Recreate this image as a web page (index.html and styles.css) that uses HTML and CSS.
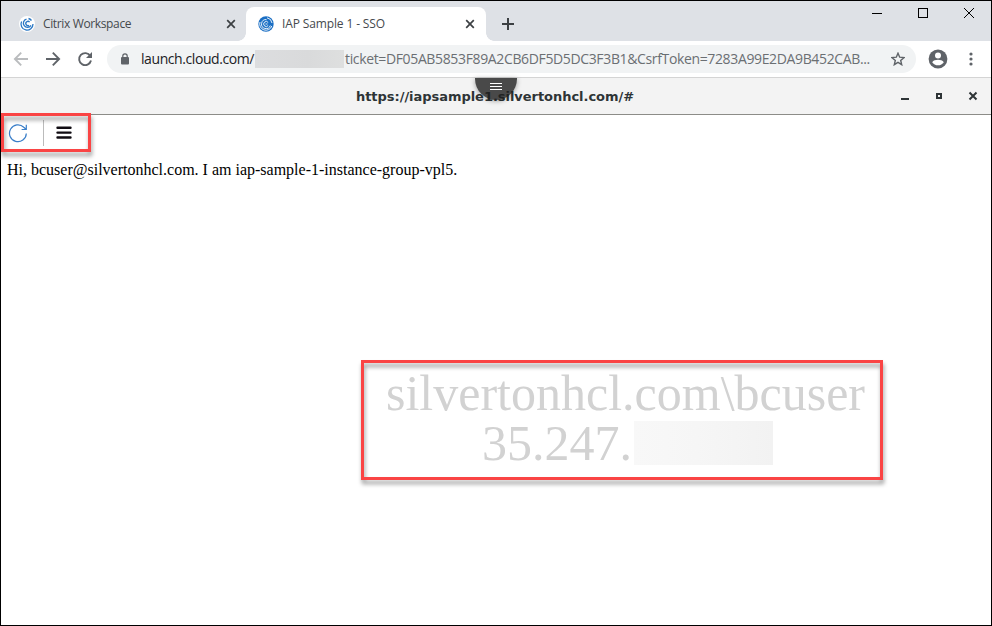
FILE: index.html
```html
<!DOCTYPE html>
<html lang="en">
<head>
<meta charset="utf-8">
<title>IAP Sample 1 - SSO</title>
<link rel="stylesheet" href="styles.css">
</head>
<body>
<div class="window">
  <header class="tabstrip">
    <div class="tab tab-idle">
      <svg class="favicon" width="16" height="16" viewBox="0 0 16 16"><circle cx="8" cy="8" r="8" fill="#fff"/><g fill="none" stroke="#2b78c5" stroke-width="1.300"><path d="M2.600 5.500A6 6 0 1 0 14 8M7.500 3.200A4.100 4.100 0 1 0 12 9.300M10.600 6.200A2.100 2.100 0 1 0 10 9.300M9.500 2.500A5.800 5.800 0 0 1 12.500 4.500"/></g></svg>
      <span class="tab-title title-idle">Citrix Workspace</span>
      <svg class="tab-close" width="10" height="10" viewBox="0 0 10 10"><path d="M1.200 1.200l7.600 7.600M8.800 1.200L1.200 8.800"/></svg>
    </div>
    <div class="tab tab-active">
      <svg class="favicon" width="16" height="16" viewBox="0 0 16 16"><circle cx="8" cy="8" r="7.700" fill="#1b6fc4"/><g fill="none" stroke="#fff" stroke-width=".9"><path d="M2 6A6.200 6.200 0 0 0 13.800 10M8.500 3.600A4.500 4.500 0 1 0 12.300 9.500M10.200 6.500A2.500 2.500 0 1 0 10.200 9.500M7.500 8H9.500M9 1.800A6.200 6.200 0 0 1 14 7"/></g></svg>
      <span class="tab-title title-active">IAP Sample 1 - SSO</span>
      <svg class="tab-close" width="10" height="10" viewBox="0 0 10 10"><path d="M1.200 1.200l7.600 7.600M8.800 1.200L1.200 8.800"/></svg>
    </div>
    <svg class="new-tab" width="12" height="12" viewBox="0 0 12 12"><path d="M6 0v12M0 6h12"/></svg>
    <div class="window-controls">
      <svg width="12" height="12" viewBox="0 0 12 12" shape-rendering="crispEdges"><path d="M1 6.500h10"/></svg>
      <svg width="12" height="12" viewBox="0 0 12 12" shape-rendering="crispEdges"><path d="M1.500 1.500h9v9h-9z"/></svg>
      <svg width="12" height="12" viewBox="0 0 12 12"><path d="M1 1l10 10M11 1L1 11"/></svg>
    </div>
  </header>
  <nav class="toolbar">
    <svg class="nav-icon back" viewBox="0 0 16 16"><path d="M15 8H2.500M8.200 1.700L1.900 8l6.300 6.300"/></svg>
    <svg class="nav-icon" viewBox="0 0 16 16"><path d="M1 8h12.500M7.800 1.700L14.100 8l-6.300 6.300"/></svg>
    <svg class="nav-icon" viewBox="0 0 16 16"><path d="M13.300 5A6 6 0 1 0 14 9.500"/><path d="M15 1v6H9z" fill="#5f6368" stroke="none"/></svg>
    <div class="omnibox">
      <svg class="lock" width="10" height="12" viewBox="0 0 10 12"><rect x="1" y="4" width="8" height="7.500" rx="1" fill="#5f6368"/><path d="M2.800 4.500V3a2.200 2.200 0 0 1 4.400 0v1.500" fill="none" stroke="#5f6368" stroke-width="1.200"/></svg>
      <span class="url-host">launch.cloud.com/</span>
      <span class="url-mask"></span>
      <span class="url-query">ticket=DF05AB5853F89A2CB6DF5D5DC3F3B1&amp;CsrfToken=7283A99E2DA9B452CAB...</span>
      <svg class="star" width="14" height="14" viewBox="0 0 14 14"><path d="M7 1.200l1.700 4 4.300.4-3.300 2.800 1 4.300L7 10.400l-3.700 2.300 1-4.300L1 5.600l4.300-.4z"/></svg>
    </div>
    <svg class="avatar" width="20" height="20" viewBox="0 0 20 20"><circle cx="10" cy="10" r="9.400" fill="#5f6368"/><circle cx="10" cy="6.500" r="3" fill="#fff"/><path d="M4.200 13.200c1-1.700 3.600-2.400 5.800-2.400s4.800.7 5.800 2.400a6.900 6.900 0 0 1-11.600 0z" fill="#fff"/></svg>
    <svg class="more" width="4" height="14" viewBox="0 0 4 14"><circle cx="2" cy="2" r="1.600"/><circle cx="2" cy="7" r="1.600"/><circle cx="2" cy="12" r="1.600"/></svg>
  </nav>
  <div class="remote-bar">
    <span class="remote-title">https://iapsample1.silvertonhcl.com/#</span>
    <div class="remote-handle"><svg width="12" height="8" viewBox="0 0 12 8" shape-rendering="crispEdges"><path d="M0 .5h12M0 3.500h12M0 6.500h12"/></svg></div>
    <div class="remote-controls">
      <svg width="10" height="10" viewBox="0 0 10 10" shape-rendering="crispEdges"><path d="M1 8h8"/></svg>
      <svg width="10" height="10" viewBox="0 0 10 10" shape-rendering="crispEdges"><path d="M3 3h4v4H3z"/></svg>
      <svg width="10" height="10" viewBox="0 0 10 10"><path d="M1.500 1.500l7 7M8.500 1.500l-7 7"/></svg>
    </div>
  </div>
  <main class="page">
    <div class="page-tools">
      <svg class="reload" width="20" height="20" viewBox="0 0 20 20"><path d="M18.300 10.500A8.400 8.400 0 1 1 15.800 4.300L18 6.300M18.300 1.800v4.700h-4.700"/></svg>
      <span class="divider"></span>
      <svg class="menu" width="16" height="14" viewBox="0 0 16 14"><path d="M1.500 1.800h13M1.500 6.600h13M1.500 11.500h13"/></svg>
    </div>
    <p class="greeting">Hi, bcuser@silvertonhcl.com. I am iap-sample-1-instance-group-vpl5.</p>
    <div class="callout callout-tools"></div>
    <div class="watermark">
      <div class="mark-user">silvertonhcl.com\bcuser</div>
      <div class="mark-ip"><span>35.247.</span><span class="ip-mask"></span></div>
    </div>
    <div class="callout callout-mark"></div>
  </main>
</div>
</body>
</html>
```
FILE: styles.css
```css
* { box-sizing: border-box; }
body { margin: 0; }
svg { display: block; flex: none; }
.window {
  width: 992px;
  height: 626px;
  border: 1px solid #000;
  background: #fff;
  display: flex;
  flex-direction: column;
  overflow: hidden;
  font-family: "Open Sans", sans-serif;
}
.tabstrip {
  height: 40px;
  flex: none;
  background: #dee1e6;
  display: flex;
  align-items: flex-end;
}
.tab {
  height: 34px;
  display: flex;
  align-items: center;
  color: #45494d;
  font-size: 12px;
  white-space: nowrap;
}
.tab-idle { width: 245px; padding: 0 10px 0 18px; }
.tab-active {
  position: relative;
  width: 240px;
  padding: 0 11px 0 12px;
  background: #fff;
  border-radius: 8px 8px 0 0;
}
.tab-active::before, .tab-active::after {
  content: "";
  position: absolute;
  bottom: 0;
  width: 8px;
  height: 8px;
}
.tab-active::before { left: -8px; background: radial-gradient(circle at 0 0, transparent 7.5px, #fff 8px); }
.tab-active::after { right: -8px; background: radial-gradient(circle at 100% 0, transparent 7.5px, #fff 8px); }
.tab-title { margin-left: 8px; line-height: 16px; }
.title-idle { letter-spacing: -.36px; }
.title-active { letter-spacing: -.13px; }
.tab-close { margin-left: auto; fill: none; stroke: #3c4043; stroke-width: 1.7; }
.new-tab { margin: 0 0 11px 16px; stroke: #3c4043; stroke-width: 2; }
.window-controls {
  align-self: flex-start;
  display: flex;
  gap: 34px;
  margin: 6px 16px 0 auto;
  fill: none;
  stroke: #000;
  stroke-width: 1;
}
.toolbar {
  height: 36px;
  flex: none;
  display: flex;
  align-items: center;
  padding-left: 12px;
}
.nav-icon { width: 16px; height: 16px; margin-right: 16px; fill: none; stroke: #5f6368; stroke-width: 1.9; }
.back { stroke: #babcbe; }
.omnibox {
  width: 809px;
  height: 28px;
  margin-left: -2px;
  padding: 0 11px 0 13px;
  border-radius: 14px;
  background: #f1f3f4;
  display: flex;
  align-items: center;
  font-size: 14px;
  line-height: 18px;
  white-space: nowrap;
}
.url-host { width: 114px; margin-left: 11px; color: #202124; letter-spacing: -.42px; }
.url-mask { width: 89px; height: 18px; background: linear-gradient(90deg, #dcdddf, #d9dadb 60%, #dedfdf); }
.url-query { width: 526px; margin-left: 1px; color: #6b6f73; letter-spacing: -.36px; }
.star { margin-left: auto; fill: none; stroke: #5f6368; stroke-width: 1.4; }
.avatar { margin-left: 12px; }
.more { margin-left: 20.500px; fill: #5f6368; }
.remote-bar {
  position: relative;
  height: 38px;
  flex: none;
  border-top: 1px solid #d4d4d4;
  border-bottom: 1px solid #8c8c88;
  background: #f3f3f3;
}
.remote-title {
  display: block;
  text-align: center;
  font: bold 13px/37px "DejaVu Sans", sans-serif;
  letter-spacing: -.04px;
  color: #2e3436;
  padding-right: 2px;
}
.remote-handle {
  position: absolute;
  left: 474px;
  top: 0;
  width: 42px;
  height: 22px;
  padding: 5px 0 0 15px;
  border-radius: 0 0 21px 21px;
  background: rgba(30, 30, 30, .8);
  box-shadow: 0 1px 5px rgba(0, 0, 0, .35);
  stroke: #fff;
}
.remote-controls {
  position: absolute;
  right: 13px;
  top: 13px;
  display: flex;
  gap: 24px;
  fill: none;
  stroke: #2e3436;
  stroke-width: 2;
}
.page { position: relative; flex: 1; padding: 5px 6px 5px 7px; }
.page-tools { height: 26px; display: flex; align-items: center; }
.reload { fill: none; stroke: #3b7fc9; stroke-width: 1.2; }
.divider { width: 1px; height: 26px; margin: 0 12px 0 15px; background: #bbb; }
.menu { stroke: #100c12; stroke-width: 2.4; stroke-linecap: round; }
.greeting { margin: 14px 0 0 -1px; font: 16px/20px "Liberation Serif", serif; color: #000; }
.callout {
  position: absolute;
  border: 3px solid #fa4444;
  filter: drop-shadow(1px 4px 2px rgba(0, 0, 0, .4));
}
.callout-tools { left: 0; top: -2px; width: 90px; height: 39px; }
.callout-mark { left: 360px; top: 245px; width: 522px; height: 120px; }
.watermark {
  position: absolute;
  left: 363px;
  top: 253px;
  width: 516px;
  font: 50px/50px "Liberation Serif", serif;
  color: #d2d2d2;
  text-align: center;
}
.mark-user { padding-left: 7px; }
.mark-ip { display: flex; align-items: center; margin-left: 118px; }
.ip-mask { width: 139px; height: 44px; margin-left: 2px; background: linear-gradient(90deg, #f8f8f8, #f6f6f6 45%, #f2f2f2); }
```
